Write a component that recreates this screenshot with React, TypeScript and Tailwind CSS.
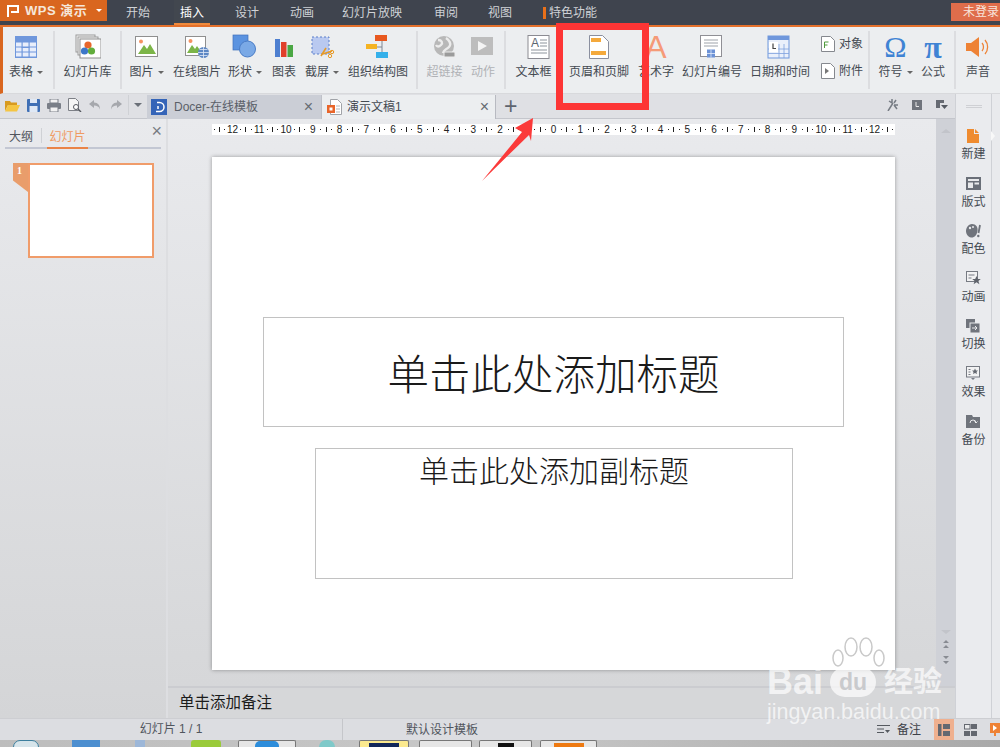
import type { ReactNode } from 'react';

const cjk = "font-['Liberation_Sans','Noto_Sans_CJK_SC',sans-serif]";

// ribbon icons, all on a 26 box
function Ico({ children, w = 26, h = 26 }: { children: ReactNode; w?: number; h?: number }) {
  return (
    <svg width={w} height={h} viewBox={`0 0 ${w} ${h}`}>
      {children}
    </svg>
  );
}

const TableIcon = () => (
  <Ico>
    <rect x="2" y="2" width="22" height="22" fill="#6f97dc" />
    {[8.5, 13.5, 18.5].map(y => <rect key={y} x="3" y={y} width="20" height="4" fill="#e8eefb" />)}
    <rect x="8.5" y="8" width="1.2" height="16" fill="#6f97dc" />
    <rect x="15.5" y="8" width="1.2" height="16" fill="#6f97dc" />
    <rect x="8.5" y="13" width="8" height="1" fill="#6f97dc" />
  </Ico>
);
const LibraryIcon = () => (
  <Ico>
    <rect x="1" y="1" width="19" height="17" fill="#f4f4f4" stroke="#9a9a9a" />
    <rect x="3" y="3" width="20" height="18" fill="#f4f4f4" stroke="#9a9a9a" />
    <rect x="5" y="5" width="21" height="19" fill="#fff" stroke="#8e8e8e" />
    <circle cx="13" cy="11" r="3.6" fill="#e8672c" />
    <circle cx="9.5" cy="17" r="3.6" fill="#3d78c9" />
    <circle cx="16.5" cy="17" r="3.6" fill="#62ad3c" />
  </Ico>
);
const PictureIcon = () => (
  <Ico>
    <rect x="1.5" y="2.5" width="22" height="20" fill="#fff" stroke="#8f8f8f" />
    <circle cx="7" cy="7.5" r="2" fill="#f59362" />
    <path d="M4 20l6-9 3 4 3-5 6 10z" fill="#7cb548" />
  </Ico>
);
const OnlinePicIcon = () => (
  <Ico>
    <rect x="1.5" y="2.5" width="20" height="19" fill="#fff" stroke="#8f8f8f" />
    <circle cx="6.5" cy="7" r="2" fill="#f59362" />
    <path d="M3 19l5-8 3 4 2-3 5 7z" fill="#7cb548" />
    <circle cx="19.5" cy="18.5" r="5.5" fill="#5d87c4" />
    <path d="M14 18.5h11M19.5 13v11M15.5 15.5h8M15.5 21.5h8" stroke="#dfe8f6" strokeWidth="0.8" fill="none" />
  </Ico>
);
const ShapeIcon = () => (
  <Ico>
    <rect x="1" y="1" width="15" height="15" fill="#5b93e0" stroke="#3f70ba" strokeWidth="0.7" />
    <circle cx="15.5" cy="15" r="8" fill="#7aa9e6" stroke="#4a7cc6" />
  </Ico>
);
const ChartIcon = () => (
  <Ico>
    <rect x="4" y="5" width="5" height="18" fill="#4d7fd0" />
    <rect x="10" y="8" width="5.5" height="15" fill="#e0402a" />
    <rect x="16.5" y="11" width="5.5" height="12" fill="#4aa744" />
  </Ico>
);
const CutIcon = () => (
  <Ico>
    <rect x="3" y="3" width="17" height="17" fill="#b9c9f0" stroke="#5b7fc9" strokeDasharray="2 2" />
    <path d="M12 22l5-8M23 17l-9 3" stroke="#e79a27" strokeWidth="1.6" fill="none" />
    <circle cx="23" cy="18" r="1.7" fill="none" stroke="#e79a27" />
    <circle cx="21" cy="22" r="1.7" fill="none" stroke="#e79a27" />
  </Ico>
);
const OrgIcon = () => (
  <Ico>
    <path d="M17 6v17M12 13h5M17 6h3M17 22h3" stroke="#7e8794" fill="none" />
    <rect x="10" y="1" width="12" height="6" fill="#e8581f" />
    <rect x="1" y="10" width="11" height="5" fill="#f5b322" />
    <rect x="11" y="18" width="12" height="6" fill="#35b0ea" />
  </Ico>
);
const LinkIcon = () => (
  <Ico>
    <circle cx="12" cy="12" r="10" fill="#b8b8b8" />
    <path d="M6 6c4 0 5 3 3 5s-4 2-5 0M14 4c3 2 6 6 3 9s-5 2-6 6" stroke="#ececec" strokeWidth="2.4" fill="none" />
    <rect x="12" y="18" width="11" height="5" rx="1" fill="#9b9b9b" stroke="#ececec" />
  </Ico>
);
const ActionIcon = () => (
  <Ico>
    <rect x="1" y="3" width="22" height="18" fill="#bdbdbd" />
    <path d="M8 7l9 5-9 5z" fill="#f4f4f4" />
  </Ico>
);
const TextBoxIcon = () => (
  <Ico>
    <rect x="2" y="1.5" width="21" height="23" fill="#fff" stroke="#8b8b92" />
    <text x="5" y="13" fontSize="12" fill="#5c6670" fontFamily="Liberation Sans">A</text>
    <path d="M14 6h7M14 9h7M14 12h7M5 16h16M5 19h16" stroke="#8d949c" fill="none" />
  </Ico>
);
const HeaderIcon = () => (
  <Ico>
    <path d="M3.5 1.5h13l6 6v17h-19z" fill="#fff" stroke="#8a8f9f" />
    <rect x="5" y="4" width="10" height="4" fill="#f4a93c" />
    <rect x="5" y="17" width="15" height="4" fill="#f4a93c" />
  </Ico>
);
const SlideNumIcon = () => (
  <Ico>
    <rect x="1.5" y="1.5" width="21" height="21" fill="#fff" stroke="#8f8f95" />
    <path d="M5 6h14M5 9h14M5 12h14" stroke="#9ea3aa" fill="none" />
    <rect x="8" y="15.5" width="8" height="8" fill="#6c92d6" />
    <path d="M8 19.5h8M12 15.5v8" stroke="#e4ecfa" strokeWidth="0.8" />
  </Ico>
);
const DateIcon = () => (
  <Ico>
    <rect x="1" y="2" width="21" height="22" fill="#eaf0fb" stroke="#6f97dc" />
    <rect x="1" y="2" width="21" height="4" fill="#6f97dc" />
    <path d="M1 15h21M1 19.500h21M12 10v14M17 10v14" stroke="#7ea1de" strokeWidth="0.8" fill="none" />
    <rect x="2" y="8" width="9" height="10" fill="#fff" />
    <path d="M6 9.500v5h3" stroke="#444" strokeWidth="1.2" fill="none" />
  </Ico>
);
const SoundIcon = () => (
  <Ico>
    <path d="M1 9h5l8-6v20l-8-6H1z" fill="#ee8235" />
    <path d="M17 9c2 2 2 6 0 8M20 6c3.500 4 3.500 10 0 14" stroke="#ee8235" strokeWidth="1.3" fill="none" />
  </Ico>
);

function Sep({ ml = 'ml-0' }: { ml?: string }) {
  return <div className={`w-[2px] h-[58px] bg-[#dcdde0] self-center ${ml}`} />;
}

function RibbonItem({ w, label, icon, arrow, off }: { w: string; label: string; icon: ReactNode; arrow?: boolean; off?: boolean }) {
  return (
    <div className={`${w} flex flex-col items-center pt-[7px] shrink-0`}>
      <div className="h-[26px] flex items-center justify-center">{icon}</div>
      <div className={`mt-[3px] text-[12px] leading-[18px] whitespace-nowrap flex items-center ${off ? 'text-[#b0b2b6]' : 'text-[#444a52]'}`}>
        {label}
        {arrow && <span className="ml-[4px] w-0 h-0 border-x-[3px] border-x-transparent border-t-[3px] border-t-[#666]" />}
      </div>
    </div>
  );
}

function TitleBar() {
  const tabs = [
    { t: '开始', w: 'w-[62px]' },
    { t: '插入', w: 'w-[46px]', on: true },
    { t: '设计', w: 'w-[64px]' },
    { t: '动画', w: 'w-[46px]' },
    { t: '幻灯片放映', w: 'w-[94px]' },
    { t: '审阅', w: 'w-[54px]' },
    { t: '视图', w: 'w-[54px]' },
  ];
  return (
    <div className="h-[27px] bg-[#3f444e] border-b-2 border-[#e4702b] flex shrink-0">
      <div className="w-[107px] h-[21px] bg-[#d9661f] flex items-center pl-[7px] text-white">
        <svg width="12" height="12" viewBox="0 0 12 12">
          <path d="M1 12V1h10v6H4" fill="none" stroke="#fff" strokeWidth="2" />
        </svg>
        <span className="ml-[6px] text-[13px] font-bold tracking-[0.5px] text-[#f5e6da] whitespace-nowrap">WPS 演示</span>
        <span className="ml-auto mr-[5px] w-0 h-0 border-x-[3px] border-x-transparent border-t-[3px] border-t-white" />
      </div>
      {tabs.map(tab => (
        <div key={tab.t} className={`${tab.w} h-[25px] flex justify-center text-[12px] leading-[26px] ${tab.on ? 'text-white' : 'text-[#cfd2d6]'}`}>
          <span className={tab.on ? 'px-[6px] border-b-[2px] border-[#f08a3c] h-[25px] bg-[#42474f]' : ''}>{tab.t}</span>
        </div>
      ))}
      <div className="ml-[16px] flex items-center h-[25px] text-[12px] text-[#cfd2d6]">
        <span className="w-[3px] h-[12px] bg-[#e8701a] mr-[3px]" />
        特色功能
      </div>
      <div className="ml-auto mt-[3px] w-[49px] h-[18px] bg-[#df6d4b] text-[#f8e5dc] text-[12px] leading-[18px] pl-[12px] whitespace-nowrap overflow-hidden">未登录</div>
    </div>
  );
}

function Ribbon() {
  return (
    <div className="h-[67px] bg-[#eceef0] border-l-[3px] border-l-[#d9661f] border-b border-b-[#d8d9dc] flex shrink-0 overflow-hidden">
      <RibbonItem w="w-[46px]" label="表格" arrow icon={<TableIcon />} />
      <Sep ml="ml-[4px]" />
      <RibbonItem w="w-[65px]" label="幻灯片库" icon={<LibraryIcon />} />
      <Sep />
      <RibbonItem w="w-[49px]" label="图片" arrow icon={<PictureIcon />} />
      <RibbonItem w="w-[52px]" label="在线图片" icon={<OnlinePicIcon />} />
      <RibbonItem w="w-[44px]" label="形状" arrow icon={<ShapeIcon />} />
      <RibbonItem w="w-[34px]" label="图表" icon={<ChartIcon />} />
      <RibbonItem w="w-[42px]" label="截屏" arrow icon={<CutIcon />} />
      <RibbonItem w="w-[70px]" label="组织结构图" icon={<OrgIcon />} />
      <Sep ml="ml-[3px]" />
      <RibbonItem w="w-[53px]" label="超链接" off icon={<LinkIcon />} />
      <RibbonItem w="w-[24px]" label="动作" off icon={<ActionIcon />} />
      <Sep ml="ml-[9px]" />
      <RibbonItem w="w-[65px]" label="文本框" arrow icon={<TextBoxIcon />} />
      <RibbonItem w="w-[56px]" label="页眉和页脚" icon={<HeaderIcon />} />
      <RibbonItem
        w="w-[58px]"
        label="艺术字"
        icon={<span className="font-['Liberation_Sans',sans-serif] text-[32px] leading-[26px] text-[#f59a78]">A</span>}
      />
      <RibbonItem w="w-[54px]" label="幻灯片编号" icon={<SlideNumIcon />} />
      <RibbonItem w="w-[82px]" label="日期和时间" icon={<DateIcon />} />
      <div className="w-[46px] shrink-0 pt-[8px] flex flex-col gap-[9px] text-[12px] leading-[18px] text-[#444a52]">
        <div className="flex items-center gap-[4px] whitespace-nowrap">
          <svg width="14" height="16" viewBox="0 0 14 16">
            <path d="M.5.5h9l4 4v11H.5z" fill="#fff" stroke="#85888e" />
            <path d="M3.500 12V6h4M3.500 9h3" stroke="#4f9a3c" fill="none" />
          </svg>
          对象
        </div>
        <div className="flex items-center gap-[4px] whitespace-nowrap">
          <svg width="14" height="16" viewBox="0 0 14 16">
            <path d="M.5.5h9l4 4v11H.5z" fill="#fff" stroke="#85888e" />
            <path d="M4 5l4 3-4 3z" fill="#777" />
          </svg>
          附件
        </div>
      </div>
      <Sep ml="ml-[1px]" />
      <RibbonItem
        w="w-[51px]"
        label="符号"
        arrow
        icon={<span className="font-['Liberation_Serif',serif] text-[30px] leading-[26px] text-[#3f83d4]">Ω</span>}
      />
      <RibbonItem
        w="w-[24px]"
        label="公式"
        icon={<span className="font-['Liberation_Serif',serif] font-bold text-[32px] leading-[26px] text-[#3f83d4]">π</span>}
      />
      <Sep ml="ml-[9px]" />
      <RibbonItem w="w-[44px]" label="声音" icon={<SoundIcon />} />
    </div>
  );
}

function QuickBar() {
  return (
    <div className="w-[147px] flex items-center shrink-0 pl-[5px] pb-[2px]">
      <svg width="15" height="13" viewBox="0 0 15 13">
        <path d="M0 2h5l1 1.500h6V6H3L0 12z" fill="#d89a1f" />
        <path d="M3 6h12l-3 6.500H0z" fill="#f5c542" />
      </svg>
      <svg className="ml-[7px]" width="13" height="13" viewBox="0 0 13 13">
        <rect width="13" height="13" rx="1" fill="#3f6fb5" />
        <rect x="3" y="0" width="7" height="4" fill="#dfe8f5" />
        <rect x="2.500" y="7" width="8" height="6" fill="#dfe8f5" />
      </svg>
      <svg className="ml-[7px]" width="14" height="13" viewBox="0 0 14 13">
        <rect x="3" y="0" width="8" height="4" fill="#f2f2f2" stroke="#7a7f88" />
        <rect x="0" y="4" width="14" height="6" rx="1" fill="#7a7f88" />
        <rect x="3" y="8" width="8" height="5" fill="#f2f2f2" stroke="#7a7f88" />
      </svg>
      <svg className="ml-[7px]" width="14" height="14" viewBox="0 0 14 14">
        <path d="M.5.5h7l3 3v9H.5z" fill="#f5f5f5" stroke="#7d8087" />
        <circle cx="8" cy="9" r="2.500" fill="#fff" stroke="#55585f" />
        <path d="M10 11l3 3" stroke="#55585f" strokeWidth="1.400" />
      </svg>
      <svg className="ml-[7px]" width="12" height="11" viewBox="0 0 12 11">
        <path d="M5 0L0 4l5 4V5.500c3 0 5 1 6 4 0-4-2-7-6-7z" fill="#a6a8ad" />
      </svg>
      <svg className="ml-[9px]" width="12" height="11" viewBox="0 0 12 11">
        <path d="M7 0l5 4-5 4V5.500c-3 0-5 1-6 4 0-4 2-7 6-7z" fill="#a6a8ad" />
      </svg>
      <span className="ml-[6px] w-px h-[20px] bg-[#cfd1d5]" />
      <span className="ml-[5px] w-0 h-0 border-x-[4px] border-x-transparent border-t-[4px] border-t-[#6b7078]" />
    </div>
  );
}

function TabRow() {
  return (
    <div className="h-[25px] bg-[#dfe0e4] border-b border-[#c4c6cc] flex shrink-0 text-[12px]">
      <QuickBar />
      <div className="w-[175px] mt-[1px] h-[24px] bg-[#cbced6] flex items-center pl-[4px] pr-[8px] text-[#5a5f68] border-r border-[#bfc1c8]">
        <svg width="16" height="16" viewBox="0 0 16 16">
          <rect width="16" height="16" fill="#3464b8" />
          <path d="M6 3.500h2.500a4.500 4.500 0 0 1 0 9H5M7 7v3" stroke="#fff" strokeWidth="1.500" fill="none" />
        </svg>
        <span className="ml-[7px]">Docer-在线模板</span>
        <span className="ml-auto text-[16px] leading-none text-[#666b73]">×</span>
      </div>
      <div className="w-[174px] mt-[1px] h-[24px] bg-[#eceef0] flex items-center pl-[5px] pr-[6px] text-[#444a52] border-r border-[#b8bac1]">
        <svg width="15" height="16" viewBox="0 0 15 16">
          <path d="M3.500.5h7l4 4v11h-11z" fill="#fff" stroke="#a0a3a8" />
          <rect x="0" y="6" width="8" height="8" fill="#e8652a" />
          <rect x="2.500" y="8.500" width="3" height="3" fill="#fff" />
          <path d="M9 7h4M9 10h4M9 13h4" stroke="#b5b7bb" />
        </svg>
        <span className="ml-[5px]">演示文稿1</span>
        <span className="ml-auto text-[16px] leading-none text-[#666b73]">×</span>
      </div>
      <span className="ml-[8px] text-[23px] leading-[24px] text-[#5e646e] font-['Liberation_Sans',sans-serif]">+</span>
      <div className="ml-auto mr-[7px] flex items-center gap-[14px] pb-[2px]">
        <svg width="12" height="12" viewBox="0 0 12 12">
          <path d="M2 12L7 4M6 0v4M10 1L8 4M12 6H8M11 10L8 6M6 4l-3-2" stroke="#777c84" strokeWidth="1.500" fill="none" />
        </svg>
        <svg width="10" height="10" viewBox="0 0 10 10">
          <rect width="10" height="10" fill="#70747c" />
          <path d="M4 2v4.500h3" stroke="#e8e8e8" fill="none" />
        </svg>
        <svg width="12" height="10" viewBox="0 0 12 10">
          <path d="M0 0h8v3H4v5H0z" fill="#666a72" />
          <path d="M5 5h7l-3.500 4z" fill="#555a62" />
        </svg>
      </div>
    </div>
  );
}

function SidePanel() {
  return (
    <div className="w-[168px] shrink-0 border-r-2 border-[#dddee1] bg-gradient-to-b from-[#e9eaed] to-[#d4d5d7] pt-[9px] relative">
      <div className="mx-[5px] h-[21px] border-b-[2px] border-[#c3c7d3] flex text-[12px] leading-[18px]">
        <span className="ml-[4px] w-[32px] text-[#50555d]">大纲</span>
        <span className="w-px h-[15px] bg-[#cfd1d5]" />
        <span className="ml-[5px] w-[41px] h-[21px] text-center border-b-[2px] border-[#ea8448] text-[#ef9a62]">幻灯片</span>
      </div>
      <span className="absolute right-[4px] top-[3px] text-[18px] leading-[18px] text-[#777b82]">×</span>
      <div className="mt-[14px] ml-[13px] flex">
        <div className="w-[15px] h-[29px] bg-[#e99d6b] [clip-path:polygon(0_0,100%_0,100%_100%,0_60%)] text-white text-[10px] font-bold leading-[16px] pl-[4px] font-['Liberation_Serif',serif]">1</div>
        <div className="w-[126px] h-[95px] bg-white border-2 border-[#f09c6a]" />
      </div>
    </div>
  );
}

function Marks() {
  return (
    <span className="w-[15.750px] flex items-center justify-around">
      <span className="w-px h-px bg-[#222]" />
      <span className="w-px h-[5px] bg-[#222]" />
      <span className="w-px h-px bg-[#222]" />
    </span>
  );
}

function Ruler() {
  const nums = [12, 11, 10, 9, 8, 7, 6, 5, 4, 3, 2, 1, 0, 1, 2, 3, 4, 5, 6, 7, 8, 9, 10, 11, 12];
  return (
    <div className="w-[683px] h-[11px] bg-white flex justify-center items-center text-[#222] text-[10px] leading-none font-['Liberation_Sans',sans-serif] shrink-0">
      <Marks />
      {nums.map((n, i) => (
        <div key={i} className="flex items-center">
          <span className="w-[11px] text-center">{n}</span>
          {i < nums.length - 1 && <Marks />}
        </div>
      ))}
      <Marks />
    </div>
  );
}

function Canvas() {
  return (
    <div className="flex-1 flex min-h-0">
      <div className="flex-1 pl-[44px] pt-[5px] bg-gradient-to-b from-[#e9eaed] to-[#d6d7d9]">
        <Ruler />
        <div className="mt-[22px] w-[683px] h-[513px] bg-white shadow-[0_0_4px_rgba(0,0,0,0.35)] pt-[160px] pl-[51px] text-[#1a1a1a] font-light">
          <div className="w-[581px] h-[110px] border border-[#c2c2c2] pt-[7px] flex items-center justify-center text-[41.500px] leading-none">
            单击此处添加标题
          </div>
          <div className="mt-[21px] ml-[52px] w-[478px] h-[131px] border border-[#c2c2c2] pt-[5px] text-center text-[30px] leading-[36px]">
            单击此处添加副标题
          </div>
        </div>
      </div>
      <div className="w-[19px] bg-[#cfd1d7] flex flex-col items-center pt-[10px]">
        <span className="w-0 h-0 border-x-[5px] border-x-transparent border-b-[4px] border-b-[#c2c4ca]" />
        <div className="mt-auto mb-[22px] flex flex-col items-center gap-[6px]">
          <span className="w-0 h-0 border-x-[5px] border-x-transparent border-t-[4px] border-t-[#c2c4ca]" />
          <svg width="8" height="9" viewBox="0 0 8 9">
            <path d="M4 0l3 3H1zM4 5l3 3H1z" fill="#888b92" />
          </svg>
          <svg width="8" height="9" viewBox="0 0 8 9">
            <path d="M1 1h6L4 4zM1 6h6L4 9z" fill="#888b92" />
          </svg>
        </div>
      </div>
    </div>
  );
}

const railIcons: { label: string; icon: ReactNode }[] = [
  {
    label: '新建',
    icon: (
      <svg width="12" height="14" viewBox="0 0 12 14">
        <path d="M0 0h7v5h5v9H0zM8 0l4 4H8z" fill="#ef8b2f" />
      </svg>
    ),
  },
  {
    label: '版式',
    icon: (
      <svg width="15" height="13" viewBox="0 0 15 13">
        <rect width="15" height="13" fill="#6a6f78" />
        <rect x="2" y="2" width="11" height="2" fill="#e8e9eb" />
        <rect x="2" y="5.500" width="5" height="5.500" fill="#e8e9eb" />
        <rect x="8.500" y="5.500" width="4.500" height="2" fill="#e8e9eb" />
      </svg>
    ),
  },
  {
    label: '配色',
    icon: (
      <svg width="15" height="14" viewBox="0 0 15 14">
        <path d="M6 0c4 0 6 3 5.500 7S8 14 5 13.500 0 10 0 7s2-7 6-7z" fill="#70747c" />
        <circle cx="4" cy="4" r="1.200" fill="#e8e9eb" />
        <circle cx="7" cy="3" r="1" fill="#e8e9eb" />
        <path d="M14 1l-1.500 8" stroke="#70747c" strokeWidth="1.800" />
        <circle cx="12.300" cy="12" r="1.200" fill="#70747c" />
      </svg>
    ),
  },
  {
    label: '动画',
    icon: (
      <svg width="15" height="14" viewBox="0 0 15 14">
        <rect x=".5" y=".5" width="11" height="10" fill="#f2f2f3" stroke="#777b83" />
        <path d="M2.500 4h6M2.500 7h3" stroke="#777b83" />
        <path d="M10.500 5l1.300 3h3l-2.400 2 1 3.200-2.900-1.900-2.900 1.900 1-3.200-2.400-2h3z" fill="#5f636b" />
      </svg>
    ),
  },
  {
    label: '切换',
    icon: (
      <svg width="14" height="14" viewBox="0 0 14 14">
        <rect x="0" y="0" width="9" height="9" fill="#70747c" />
        <rect x="4" y="4" width="10" height="10" fill="#70747c" stroke="#e8e9eb" />
        <path d="M6 9h5M9 7l2 2-2 2" stroke="#e8e9eb" fill="none" />
      </svg>
    ),
  },
  {
    label: '效果',
    icon: (
      <svg width="14" height="14" viewBox="0 0 14 14">
        <rect x=".5" y=".5" width="13" height="10.500" fill="#f2f2f3" stroke="#777b83" />
        <path d="M2.500 3.500h2M2.500 6h2M2.500 8.500h2" stroke="#777b83" />
        <path d="M9 2.500l1 2h2l-1.500 1.500.5 2-2-1-2 1 .5-2L6 4.500h2z" fill="#666a72" />
        <path d="M5 12h4l-2 2z" fill="#777b83" />
      </svg>
    ),
  },
  {
    label: '备份',
    icon: (
      <svg width="14" height="14" viewBox="0 0 14 14">
        <path d="M0 1h6l1 2h7v11H0z" fill="#70747c" />
        <path d="M4 9a3 3 0 1 1 6 0M10 9l-1.500-1.500M10 9l1.500-1.500" stroke="#e8e9eb" fill="none" />
      </svg>
    ),
  },
];

function Rail() {
  return (
    <div className="flex-1 flex min-w-0">
      <div className="w-[37px] shrink-0 bg-[#eaebee] border-x border-[#cfd1d6] flex flex-col items-center relative">
        <div className="mt-[11px] mb-[20px] w-[16px] h-[3px] border-y border-[#cfd0d4]" />
        {railIcons.map(item => (
          <div key={item.label} className="h-[47.600px] flex flex-col items-center text-[12px] leading-[16px] text-[#444a52] whitespace-nowrap">
            <div className="h-[15px] flex items-center">{item.icon}</div>
            <span className="mt-[3px]">{item.label}</span>
          </div>
        ))}
      </div>
      <div className="flex-1 bg-[#e9eaed] relative">
        <span className="absolute -left-[1px] top-[37px] w-0 h-0 border-y-[5px] border-y-transparent border-l-[4px] border-l-[#f8f8f8]" />
      </div>
    </div>
  );
}

function StatusBar() {
  return (
    <div className="h-[22px] bg-[#dcdde1] border-t border-[#cdced2] flex items-center text-[12px] text-[#50555d] shrink-0">
      <div className="w-[343px] h-[21px] border-r border-[#c5c6ca] text-center leading-[21px]">幻灯片 1 / 1</div>
      <span className="ml-[63px]">默认设计模板</span>
      <div className="ml-auto flex items-center h-[21px]">
        <svg width="13" height="10" viewBox="0 0 13 10">
          <path d="M0 .5h13M0 4h7M0 7.500h7" stroke="#55595f" fill="none" />
          <path d="M8 5h5l-2.500 3z" fill="#55595f" />
        </svg>
        <span className="ml-[7px] mr-[13px] text-[#3d4148]">备注</span>
        <div className="w-[20px] h-[21px] bg-[#efb08f] flex items-center justify-center">
          <svg width="12" height="12" viewBox="0 0 12 12">
            <rect width="3.500" height="12" fill="#646870" />
            <rect x="5" width="7" height="5" fill="#646870" />
            <rect x="5" y="7" width="7" height="5" fill="#646870" />
          </svg>
        </div>
        <svg className="ml-[10px]" width="13" height="12" viewBox="0 0 13 12">
          <rect x=".5" y=".5" width="5.500" height="4.500" fill="#e9eaec" stroke="#646870" />
          <rect x="7" width="6" height="5" fill="#646870" />
          <rect y="7" width="6" height="5" fill="#646870" />
          <rect x="7" y="7" width="6" height="5" fill="#646870" />
        </svg>
        <svg className="ml-[13px]" width="10" height="13" viewBox="0 0 10 13">
          <rect width="12" height="10" fill="#ee8235" />
          <path d="M3 2l4 3-4 3z" fill="#fff" />
          <rect x="4" y="10" width="2" height="3" fill="#ee8235" />
        </svg>
      </div>
    </div>
  );
}

function Taskbar() {
  const btn = 'h-[7px] rounded-t-[2px] border border-b-0 overflow-hidden flex justify-center shrink-0';
  return (
    <div className="h-[7px] bg-gradient-to-r from-[#bdbdbd] via-[#c8c8c8] to-[#a9a9a9] flex overflow-hidden shrink-0">
      <div className="ml-[13px] w-[26px] h-[14px] rounded-full border border-[#3d7f9e] bg-[#d6e4ea]" />
      <div className="ml-[33px] w-[28px] h-[7px] bg-[#4d8fd0]" />
      <div className="ml-[35px] w-[10px] h-[7px] bg-[#9db7d8]" />
      <div className="ml-[46px] w-[30px] h-[7px] rounded-t-[3px] bg-[#9acb3a]" />
      <div className={`ml-[17px] w-[58px] bg-[#e6e6e6] border-[#777] ${btn}`}>
        <span className="w-[24px] h-[10px] rounded-full bg-[#2d8ddb]" />
      </div>
      <div className="ml-[23px] w-[16px] h-[7px] rounded-t-full bg-[#7fc9c9]" />
      <div className={`ml-[24px] w-[50px] bg-[#fbe98e] border-[#777] ${btn}`}>
        <span className="mt-[2px] w-[30px] h-[5px] bg-[#12275a]" />
      </div>
      <div className={`ml-[10px] w-[53px] bg-[#e6e6e6] border-[#777] ${btn}`} />
      <div className={`ml-[7px] w-[53px] bg-[#e6e6e6] border-[#777] ${btn}`}>
        <span className="mt-[2px] w-[16px] h-[5px] bg-[#111]" />
      </div>
      <div className={`ml-[8px] w-[57px] bg-[#e6e6e6] border-[#777] ${btn}`}>
        <span className="mt-[2px] w-[30px] h-[5px] bg-[#ee7a12]" />
      </div>
    </div>
  );
}

// red box and arrow someone drew on the screenshot, plus the site watermark
function Overlays() {
  return (
    <>
      <div className="absolute left-[556px] top-[23px] w-[93px] h-[87px] border-[7px] border-[#fd3535]" />
      <svg className="absolute left-[478px] top-[114px]" width="60" height="70" viewBox="0 0 60 70">
        <path d="M55 4L37 14l7 4L4 67l47-46 2 6z" fill="#fb3a3a" />
      </svg>
      <div className="absolute left-[767px] top-[636px] w-[186px] text-white/70 font-['Liberation_Sans',sans-serif] pointer-events-none">
        <svg className="ml-[64px]" width="56" height="40" viewBox="0 0 56 40" fill="none" stroke="#c9c9c9" strokeWidth="1.500">
          <ellipse cx="7" cy="22" rx="5" ry="8" />
          <ellipse cx="20" cy="11" rx="6" ry="9" />
          <ellipse cx="35" cy="11" rx="6" ry="9" />
          <ellipse cx="48" cy="22" rx="5" ry="8" />
        </svg>
        <div className="-mt-[10px] flex items-center h-[32px] whitespace-nowrap">
          <span className="text-[36px] font-bold leading-[32px] w-[63px]">Bai</span>
          <span className="w-[46px] h-[30px] rounded-[15px] bg-white/70 text-[#c9cacd] text-[23px] leading-[30px] font-bold text-center">du</span>
          <span className={`ml-[8px] text-[29px] font-bold leading-[32px] ${cjk}`}>经验</span>
        </div>
        <div className="mt-[5px] text-[21.500px] leading-[18px] whitespace-nowrap font-normal">jingyan.baidu.com</div>
      </div>
    </>
  );
}

export default function App() {
  return (
    <div className={`relative w-[1000px] h-[747px] overflow-hidden flex flex-col bg-[#eceef0] ${cjk}`}>
      <TitleBar />
      <Ribbon />
      <div className="flex-1 flex min-h-0">
        <div className="w-[955px] shrink-0 flex flex-col">
          <TabRow />
          <div className="flex-1 flex min-h-0">
            <SidePanel />
            <div className="flex-1 flex flex-col min-w-0">
              <Canvas />
              <div className="h-[32px] bg-[#d6d7d9] border-t-2 border-[#cbccd0] pl-[11px] text-[15.500px] leading-[30px] text-[#1c1c1c] shrink-0">
                单击添加备注
              </div>
            </div>
          </div>
        </div>
        <Rail />
      </div>
      <StatusBar />
      <Taskbar />
      <Overlays />
    </div>
  );
}
